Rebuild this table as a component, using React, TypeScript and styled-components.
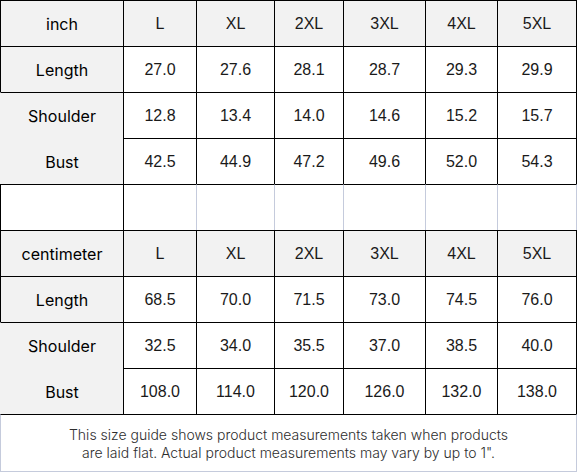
import React from 'react';
import styled, { createGlobalStyle } from 'styled-components';

const GlobalStyle = createGlobalStyle`
  html, body {
    margin: 0;
    padding: 0;
    background: #ffffff;
  }
`;

const DARK = '#000000';
const GRID = '#c5cbdc';
const FILL = '#f2f2f2';

const Sheet = styled.div`
  width: 577px;
  display: grid;
  grid-template-columns: 123px 73px 78px 69px 82px 72px 80px;
  grid-template-rows: repeat(9, 46px) 58px;
  background: #ffffff;
`;

const Cell = styled.div<{ $fill?: boolean; $top?: string; $left?: string; $right?: string; $label?: boolean }>`
  box-sizing: border-box;
  display: flex;
  align-items: center;
  justify-content: center;
  background: ${p => (p.$fill ? FILL : '#ffffff')};
  border-top: 1px solid ${p => p.$top ?? DARK};
  border-left: 1px solid ${p => p.$left ?? DARK};
  border-right: ${p => (p.$right ? `1px solid ${p.$right}` : 'none')};
  font-family: ${p => (p.$label ? '"Inter", "Noto Sans CJK SC", sans-serif' : '"Liberation Sans", Arial, sans-serif')};
  font-size: 16px;
  font-weight: ${p => (p.$label ? 380 : 400)};
  color: ${p => (p.$label ? '#000000' : '#1a1a1a')};
`;

const Footer = styled.div`
  grid-column: 1 / -1;
  box-sizing: border-box;
  border-top: 1px solid ${DARK};
  border-left: 1px solid ${GRID};
  border-right: 1px solid ${GRID};
  border-bottom: 1px solid ${GRID};
  display: flex;
  flex-direction: column;
  align-items: center;
  justify-content: center;
  padding-top: 1px;
  font-family: "Inter", "Noto Sans CJK SC", sans-serif;
  font-size: 14px;
  font-weight: 350;
  line-height: 18px;
  color: #2e2e2e;
  text-align: center;
`;

const sizes = ['L', 'XL', '2XL', '3XL', '4XL', '5XL'];

type Block = {
  unit: string;
  rows: { name: string; values: string[] }[];
};

const blocks: Block[] = [
  {
    unit: 'inch',
    rows: [
      { name: 'Length', values: ['27.0', '27.6', '28.1', '28.7', '29.3', '29.9'] },
      { name: 'Shoulder', values: ['12.8', '13.4', '14.0', '14.6', '15.2', '15.7'] },
      { name: 'Bust', values: ['42.5', '44.9', '47.2', '49.6', '52.0', '54.3'] },
    ],
  },
  {
    unit: 'centimeter',
    rows: [
      { name: 'Length', values: ['68.5', '70.0', '71.5', '73.0', '74.5', '76.0'] },
      { name: 'Shoulder', values: ['32.5', '34.0', '35.5', '37.0', '38.5', '40.0'] },
      { name: 'Bust', values: ['108.0', '114.0', '120.0', '126.0', '132.0', '138.0'] },
    ],
  },
];

const last = (i: number) => (i === sizes.length - 1 ? DARK : undefined);

const SizeBlock = ({ block }: { block: Block }) => (
  <>
    <Cell $fill $label>{block.unit}</Cell>
    {sizes.map((s, i) => (
      <Cell key={s} $fill $right={last(i)}>{s}</Cell>
    ))}
    {block.rows.map((row, r) => (
      <React.Fragment key={row.name}>
        {/* Shoulder + Bust labels sit in one unbordered grey area */}
        <Cell
          $fill
          $label
          $left={r === 0 ? DARK : FILL}
          $top={r === 2 ? FILL : DARK}
        >
          {row.name}
        </Cell>
        {row.values.map((v, i) => (
          <Cell key={i} $right={last(i)}>{v}</Cell>
        ))}
      </React.Fragment>
    ))}
  </>
);

const SpacerRow = () => (
  <>
    <Cell />
    <Cell />
    {sizes.slice(1).map((s, i) => (
      <Cell key={s} $left={GRID} $right={i === sizes.length - 2 ? GRID : undefined} />
    ))}
  </>
);

export default function App() {
  return (
    <>
      <GlobalStyle />
      <Sheet>
        <SizeBlock block={blocks[0]} />
        <SpacerRow />
        <SizeBlock block={blocks[1]} />
        <Footer>
          <span>This size guide shows product measurements taken when products</span>
          <span>are laid flat. Actual product measurements may vary by up to 1".</span>
        </Footer>
      </Sheet>
    </>
  );
}
